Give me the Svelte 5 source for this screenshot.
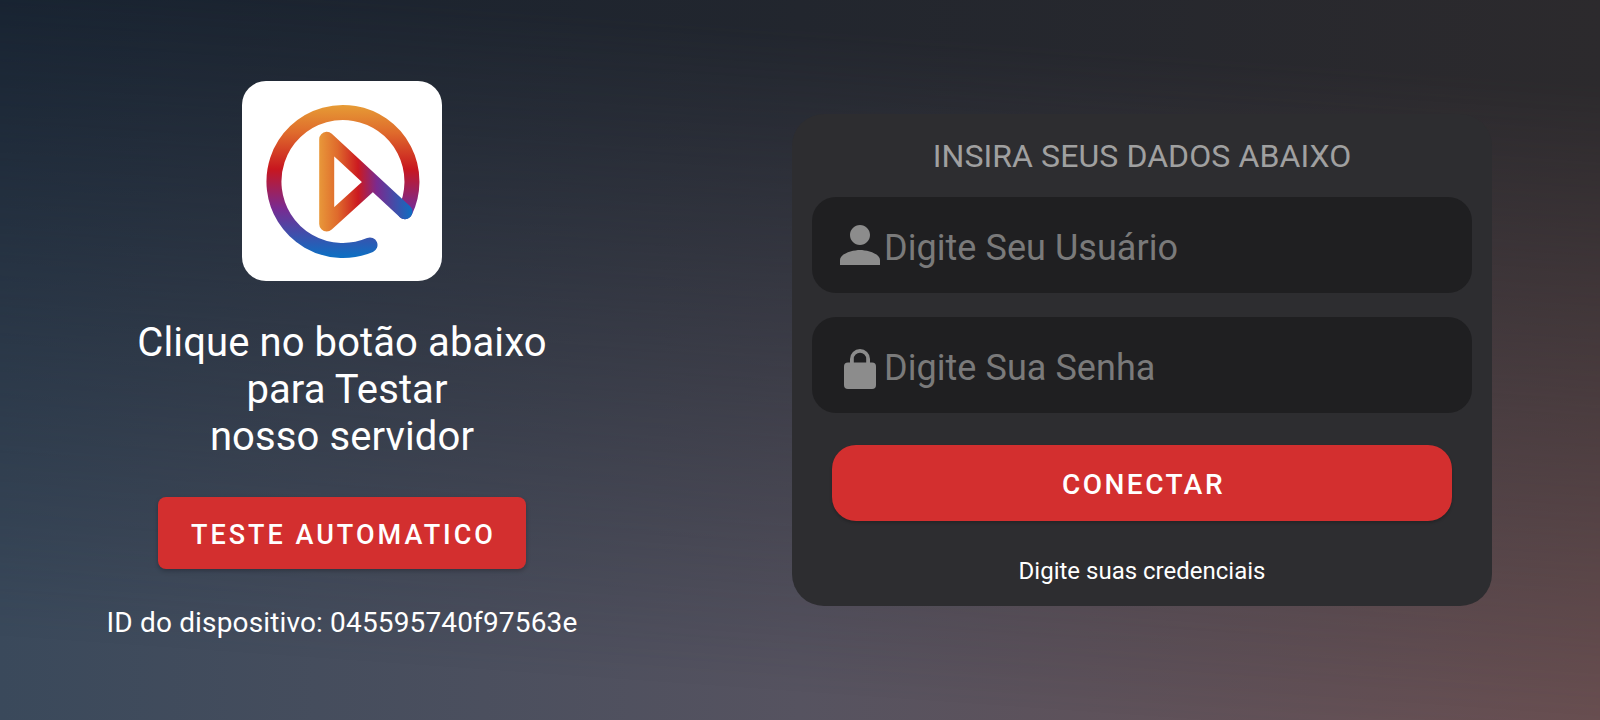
<script>
    // login screen: logo + auto test on the left, credentials card on the right
    let username = $state('');
    let password = $state('');
</script>

<div class="screen">
    <section class="test-panel">
        <div class="logo">
            <svg viewBox="0 0 200 200" width="200" height="200" aria-label="logo">
                <defs>
                    <linearGradient id="ring" gradientUnits="userSpaceOnUse" x1="0" y1="25" x2="0" y2="175">
                        <stop offset="0" stop-color="#e69a35" />
                        <stop offset="0.18" stop-color="#df6a2c" />
                        <stop offset="0.42" stop-color="#c8171f" />
                        <stop offset="0.68" stop-color="#7a2a90" />
                        <stop offset="1" stop-color="#0e6ec2" />
                    </linearGradient>
                    <linearGradient id="play" gradientUnits="userSpaceOnUse" x1="77" y1="0" x2="170" y2="0">
                        <stop offset="0" stop-color="#e8983a" />
                        <stop offset="0.2" stop-color="#df6a2c" />
                        <stop offset="0.42" stop-color="#cc1a20" />
                        <stop offset="0.62" stop-color="#7b2a8e" />
                        <stop offset="1" stop-color="#0e6ec2" />
                    </linearGradient>
                </defs>
                <path class="stroke" stroke="url(#ring)" d="M163 130.7A69 69 0 1 0 128 164" />
                <path class="stroke" stroke="url(#play)" d="M163 130.7L84.7 58.3V143L131 101" />
            </svg>
        </div>
        <p class="lead">Clique no botão abaixo<br />&nbsp;para Testar<br />nosso servidor</p>
        <button class="btn-test" type="button">TESTE AUTOMATICO</button>
        <p class="device">ID do dispositivo: 045595740f97563e</p>
    </section>

    <section class="login-panel">
        <form class="card" onsubmit={(e) => e.preventDefault()}>
            <h2>INSIRA SEUS DADOS ABAIXO</h2>
            <label class="field">
                <svg viewBox="4 4 16 16" width="40" height="40">
                    <path d="M12 12c2.21 0 4-1.79 4-4s-1.79-4-4-4-4 1.79-4 4 1.79 4 4 4zm0 2c-2.67 0-8 1.34-8 4v2h16v-2c0-2.66-5.33-4-8-4z" />
                </svg>
                <input type="text" placeholder="Digite Seu Usuário" bind:value={username} />
            </label>
            <label class="field">
                <svg class="lock" viewBox="0 0 40 40" width="40" height="40">
                    <path d="M10 15V10a10 10 0 0 1 20 0v5h-3.8v-5a6.2 6.2 0 0 0-12.4 0v5z" />
                    <rect x="4" y="13.5" width="32" height="26.5" rx="4" />
                </svg>
                <input type="password" placeholder="Digite Sua Senha" bind:value={password} />
            </label>
            <button class="btn-connect" type="submit">CONECTAR</button>
            <p class="hint">Digite suas credenciais</p>
        </form>
    </section>
</div>

<style>
    :global(body) {
        margin: 0;
        background: #2a2a2e;
    }

    .screen {
        position: relative;
        display: flex;
        width: 1600px;
        height: 720px;
        overflow: hidden;
        font-family: Roboto, "Liberation Sans", sans-serif;
        color: #fff;
        background: linear-gradient(to right, #3a495b 0%, #565360 50%, #6b5052 100%);
    }

    .screen::before {
        content: "";
        position: absolute;
        inset: 0;
        background: linear-gradient(to right, #172230 0%, #22262e 50%, #2c2a2d 100%);
        -webkit-mask-image: linear-gradient(184deg, #000 10%, transparent 90%);
        mask-image: linear-gradient(184deg, #000 10%, transparent 90%);
    }

    .test-panel,
    .login-panel {
        position: relative;
        display: flex;
        flex-direction: column;
        align-items: center;
        justify-content: center;
    }

    .test-panel {
        width: 684px;
    }

    .login-panel {
        flex: 1;
    }

    .logo {
        width: 200px;
        height: 200px;
        border-radius: 24px;
        background: #fff;
    }

    .logo svg {
        display: block;
    }

    .stroke {
        fill: none;
        stroke-width: 15;
        stroke-linecap: round;
        stroke-linejoin: round;
    }

    .lead {
        margin: 38px 0 37px;
        font-size: 40px;
        line-height: 47px;
        letter-spacing: 0.1px;
        text-align: center;
    }

    .btn-test {
        width: 368px;
        height: 72px;
        padding: 3px 0 0 3px;
        border: 0;
        border-radius: 8px;
        background: #d32f2f;
        color: #fff;
        font: 500 27px Roboto, sans-serif;
        letter-spacing: 3px;
        box-shadow: 0 2px 4px rgba(0, 0, 0, 0.25);
    }

    .device {
        margin: 38px 0 0;
        font-size: 28px;
        line-height: 32px;
        letter-spacing: 0.15px;
    }

    .card {
        display: flex;
        flex-direction: column;
        align-items: center;
        box-sizing: border-box;
        width: 700px;
        height: 492px;
        padding: 22px 20px 0;
        border-radius: 32px;
        background: #2d2d30;
    }

    h2 {
        margin: 0 0 21px;
        font-size: 32px;
        font-weight: 400;
        line-height: 40px;
        letter-spacing: 0.09px;
        color: #a0a0a0;
    }

    .field {
        display: flex;
        align-items: center;
        gap: 4px;
        box-sizing: border-box;
        width: 100%;
        height: 96px;
        margin-bottom: 24px;
        padding-left: 28px;
        border-radius: 24px;
        background: #1f1f21;
    }

    .field svg {
        flex: none;
        fill: #8c8c8c;
    }

    .field .lock {
        margin-top: 8px;
    }

    .field input {
        flex: 1;
        min-width: 0;
        height: 42px;
        margin-top: 5px;
        padding: 0;
        border: 0;
        outline: 0;
        background: transparent;
        color: #fff;
        font: 400 36px Roboto, sans-serif;
        letter-spacing: 0.05px;
    }

    .field input::placeholder {
        color: #7a7a7a;
        opacity: 1;
    }

    .btn-connect {
        width: 620px;
        height: 76px;
        margin-top: 8px;
        padding: 2px 0 0 3px;
        border: 0;
        border-radius: 24px;
        background: #d32f2f;
        color: #fff;
        font: 500 28px Roboto, sans-serif;
        letter-spacing: 2.5px;
        box-shadow: 0 2px 3px rgba(0, 0, 0, 0.2);
    }

    .hint {
        margin: 35px 0 0;
        font-size: 24px;
        line-height: 30px;
    }
</style>
